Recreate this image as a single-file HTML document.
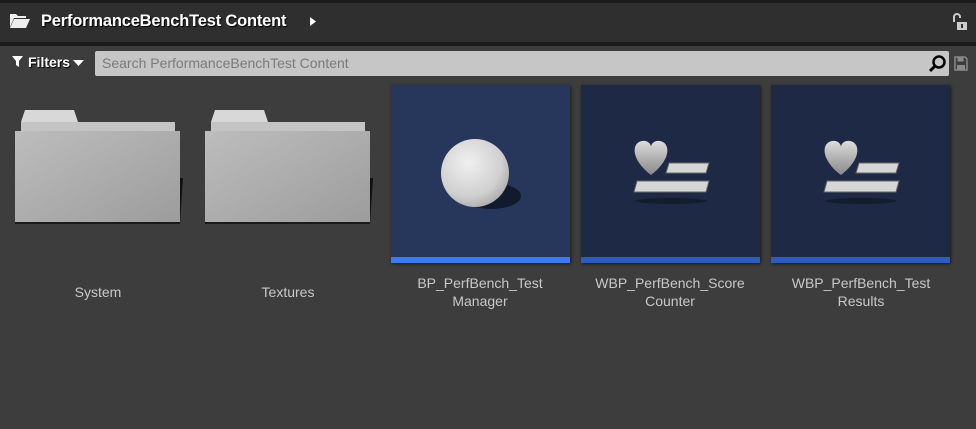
<!DOCTYPE html>
<html><head><style>
*{margin:0;padding:0;box-sizing:border-box}
body{width:976px;height:429px;background:#3d3d3d;position:relative;overflow:hidden;font-family:"Liberation Sans",sans-serif}
.abs{position:absolute}
.lbl{position:absolute;width:190px;text-align:center;color:#c8c8c8;font-size:14px;line-height:18px}
.tile{position:absolute;top:85px;width:179px;height:178px;box-shadow:1px 1px 3px rgba(0,0,0,.6)}
</style></head><body>
<div class="abs" style="left:0;top:0;width:976px;height:3px;background:#1b1b1b"></div>
<div class="abs" style="left:0;top:3px;width:976px;height:39px;background:#2f2f2f"></div>
<div class="abs" style="left:0;top:42px;width:976px;height:4px;background:#1b1b1b"></div>
<svg class="abs" style="left:9px;top:13px" width="22" height="16" viewBox="0 0 22 16">
<path d="M1 1h6l2 2h8v2H5L1 14z" fill="#eee"/><path d="M5 6h16l-4 9H1z" fill="#eee"/></svg>
<div class="abs" style="left:41px;top:12px;color:#fff;font-weight:bold;font-size:16.5px;letter-spacing:-0.2px;text-shadow:1px 1px 1px #000">PerformanceBenchTest Content</div>
<svg class="abs" style="left:309px;top:16px" width="8" height="11"><path d="M1 1l6 4.5L1 10z" fill="#fff"/></svg>
<svg class="abs" style="left:951px;top:12px" width="18" height="20" viewBox="0 0 18 20">
<path d="M3 10V5a3 3 0 0 1 6 0v1" stroke="#ccc" stroke-width="2" fill="none"/><rect x="6" y="10" width="10" height="8" fill="#ccc"/><rect x="10" y="12" width="2" height="4" fill="#333"/></svg>
<svg class="abs" style="left:12px;top:56px" width="11" height="12"><path d="M0 0h11L7 5v6L4 9V5z" fill="#fff"/></svg>
<div class="abs" style="left:28px;top:54px;color:#fff;font-weight:bold;font-size:14px;text-shadow:1px 1px 1px #000">Filters</div>
<svg class="abs" style="left:73px;top:60px" width="11" height="6"><path d="M0 0h11L5.5 6z" fill="#fff"/></svg>
<div class="abs" style="left:95px;top:51px;width:854px;height:25px;background:#c6c6c6;border-radius:2px"></div>
<div class="abs" style="left:102px;top:55px;color:#7a7a7a;font-size:14px">Search PerformanceBenchTest Content</div>
<svg class="abs" style="left:927px;top:54px" width="20" height="20" viewBox="0 0 20 20"><circle cx="12" cy="8" r="5.5" stroke="#000" stroke-width="2.5" fill="none"/><path d="M8 12l-5 5" stroke="#000" stroke-width="3"/></svg>
<svg class="abs" style="left:954px;top:56px" width="14" height="15" viewBox="0 0 14 15"><path d="M1 1h10l2 2v11H1z" fill="none" stroke="#8a8a8a" stroke-width="1.5"/><rect x="3.5" y="1.5" width="6" height="4" fill="#8a8a8a"/><rect x="3" y="9" width="8" height="5" fill="#8a8a8a"/></svg>
<svg class="abs" style="left:15px;top:110px" width="170" height="118">
<defs><linearGradient id="g" x1="0" y1="0" x2="1" y2="1"><stop offset="0" stop-color="#bdbdbd"/><stop offset="1" stop-color="#9c9c9c"/></linearGradient></defs>
<path d="M10 0h49l4 12H6z" fill="#d8d8d8"/><rect x="6" y="12" width="154" height="9" fill="#c4c4c4"/>
<path d="M165 68l3 0-3 46z" fill="#111"/>
<rect x="0" y="21" width="165" height="92" fill="url(#g)"/><rect x="0" y="112" width="165" height="2" fill="#1a1a1a"/></svg>
<svg class="abs" style="left:205px;top:110px" width="170" height="118">
<path d="M10 0h49l4 12H6z" fill="#d8d8d8"/><rect x="6" y="12" width="154" height="9" fill="#c4c4c4"/>
<path d="M165 68l3 0-3 46z" fill="#111"/>
<rect x="0" y="21" width="165" height="92" fill="url(#g)"/><rect x="0" y="112" width="165" height="2" fill="#1a1a1a"/></svg>
<div class="lbl" style="left:3px;top:283px">System</div>
<div class="lbl" style="left:193px;top:283px">Textures</div>
<div class="tile" style="left:391px;background:#26375b">
<svg class="abs" style="left:0;top:0" width="179" height="172">
<defs><radialGradient id="s" cx=".4" cy=".35" r=".7"><stop offset="0" stop-color="#f0f0f0"/><stop offset=".7" stop-color="#d0d0d0"/><stop offset="1" stop-color="#aaa"/></radialGradient></defs>
<ellipse cx="100" cy="111" rx="30" ry="13" fill="#121a2e"/>
<circle cx="84" cy="88" r="34" fill="url(#s)"/></svg>
<div class="abs" style="left:0;top:172px;width:179px;height:6px;background:#3b7af0"></div></div>
<div class="tile" style="left:581px;background:#1e2a45">
<svg class="abs" style="left:0;top:0" width="179" height="172">
<defs><linearGradient id="h" x1="0" y1="0" x2="0" y2="1"><stop offset="0" stop-color="#ddd"/><stop offset="1" stop-color="#888"/></linearGradient></defs>
<ellipse cx="90" cy="116" rx="36" ry="3" fill="#141c30"/>
<path d="M70 90C50 75 50 58 61 56c6-1 9 3 9 6 0-3 3-7 9-6 11 2 11 19-9 34z" fill="url(#h)"/>
<path d="M88 78h40l-3 10H85z" fill="#d6d6d6" stroke="#666"/>
<path d="M56 96h72l-3 11H53z" fill="#d6d6d6" stroke="#666"/></svg>
<div class="abs" style="left:0;top:172px;width:179px;height:6px;background:#2d5bbf"></div></div>
<div class="tile" style="left:771px;background:#1e2a45">
<svg class="abs" style="left:0;top:0" width="179" height="172">
<ellipse cx="90" cy="116" rx="36" ry="3" fill="#141c30"/>
<path d="M70 90C50 75 50 58 61 56c6-1 9 3 9 6 0-3 3-7 9-6 11 2 11 19-9 34z" fill="url(#h)"/>
<path d="M88 78h40l-3 10H85z" fill="#d6d6d6" stroke="#666"/>
<path d="M56 96h72l-3 11H53z" fill="#d6d6d6" stroke="#666"/></svg>
<div class="abs" style="left:0;top:172px;width:179px;height:6px;background:#2d5bbf"></div></div>
<div class="lbl" style="left:385px;top:274px">BP_PerfBench_Test<br>Manager</div>
<div class="lbl" style="left:575px;top:274px">WBP_PerfBench_Score<br>Counter</div>
<div class="lbl" style="left:766px;top:274px">WBP_PerfBench_Test<br>Results</div>
</body></html>
